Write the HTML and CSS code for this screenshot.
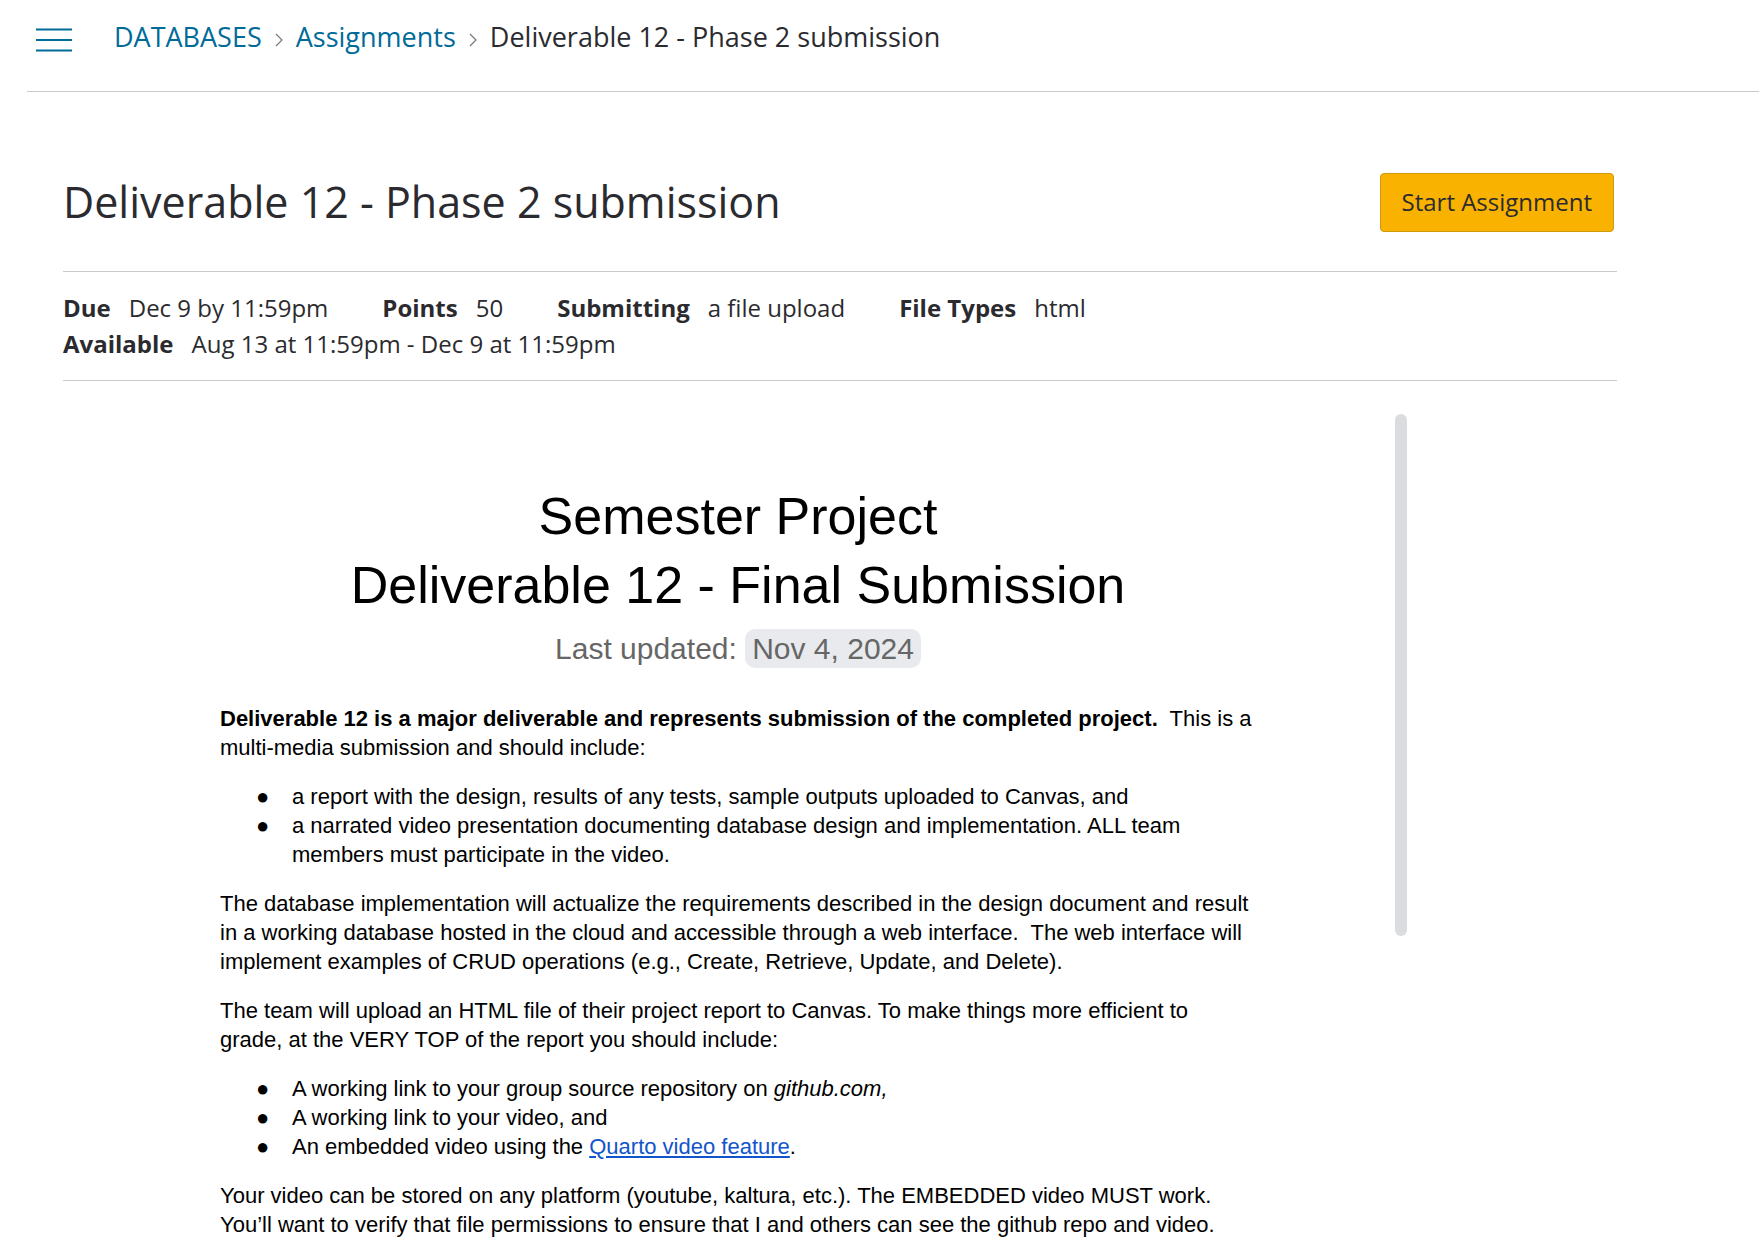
FILE: index.html
```html
<!DOCTYPE html>
<html lang="en">
<head>
<meta charset="utf-8">
<meta name="viewport" content="width=device-width, initial-scale=1">
<title>Deliverable 12 - Phase 2 submission</title>
<link rel="stylesheet" href="styles.css">
</head>
<body>
<header class="topbar">
  <button class="menu-button" type="button" aria-label="Toggle course navigation">
    <svg width="36" height="26" viewBox="0 0 36 26" aria-hidden="true"><path d="M0 2.5h36M0 13h36M0 23.5h36" fill="none" stroke="currentColor" stroke-width="2"/></svg>
  </button>
  <nav aria-label="Breadcrumb">
    <ol class="crumbs">
      <li><a href="#">DATABASES</a></li>
      <li class="crumb">
        <svg class="chevron" width="8" height="14" viewBox="0 0 8 14" aria-hidden="true"><path d="M1 1l6 6-6 6" fill="none" stroke="currentColor" stroke-width="1.2"/></svg>
        <a href="#">Assignments</a>
      </li>
      <li class="crumb">
        <svg class="chevron" width="8" height="14" viewBox="0 0 8 14" aria-hidden="true"><path d="M1 1l6 6-6 6" fill="none" stroke="currentColor" stroke-width="1.2"/></svg>
        <span aria-current="page">Deliverable 12 - Phase 2 submission</span>
      </li>
    </ol>
  </nav>
</header>
<main class="assignment">
  <div class="heading">
    <h1>Deliverable 12 - Phase 2 submission</h1>
    <button class="start-button" type="button">Start Assignment</button>
  </div>
  <dl class="details">
    <div class="detail"><dt>Due</dt><dd>Dec 9 by 11:59pm</dd></div>
    <div class="detail"><dt>Points</dt><dd>50</dd></div>
    <div class="detail"><dt>Submitting</dt><dd>a file upload</dd></div>
    <div class="detail"><dt>File Types</dt><dd>html</dd></div>
    <div class="detail detail-wide"><dt>Available</dt><dd>Aug 13 at 11:59pm - Dec 9 at 11:59pm</dd></div>
  </dl>
  <div class="viewer">
    <article class="document">
      <h2>Semester Project<br>Deliverable 12 - Final Submission</h2>
      <p class="updated">Last updated: <span class="date">Nov 4, 2024</span></p>
      <p><strong>Deliverable 12 is a major deliverable and represents submission of the completed project.</strong>&nbsp; This is a multi-media submission and should include:</p>
      <ul>
        <li>a report with the design, results of any tests, sample outputs uploaded to Canvas, and</li>
        <li>a narrated video presentation documenting database design and implementation. ALL team members must participate in the video.</li>
      </ul>
      <p>The database implementation will actualize the requirements described in the design document and result in a working database hosted in the cloud and accessible through a web interface.&nbsp; The web interface will implement examples of CRUD operations (e.g., Create, Retrieve, Update, and Delete).</p>
      <p>The team will upload an HTML file of their project report to Canvas. To make things more efficient to grade, at the VERY TOP of the report you should include:</p>
      <ul>
        <li>A working link to your group source repository on <em>github.com,</em></li>
        <li>A working link to your video, and</li>
        <li>An embedded video using the <a href="#">Quarto video feature</a>.</li>
      </ul>
      <p>Your video can be stored on any platform (youtube, kaltura, etc.). The EMBEDDED video MUST work. You’ll want to verify that file permissions to ensure that I and others can see the github repo and video.</p>
    </article>
    <div class="scroll-thumb"></div>
  </div>
</main>
</body>
</html>
```

FILE: styles.css
```css
* {
  box-sizing: border-box;
}

body {
  margin: 0;
  background: #fff;
  color: #2b2b2f;
  font-family: "Open Sans", "Noto Sans", sans-serif;
  font-size: 24px;
  line-height: 36px;
}

.topbar {
  display: flex;
  align-items: center;
  gap: 42px;
  margin-left: 27px;
  padding: 17px 9px 35px;
  border-bottom: 1px solid #c7c9cb;
}

.menu-button {
  display: flex;
  padding: 6px 0 0;
  border: 0;
  background: none;
  color: #006b99;
}

.crumbs {
  display: flex;
  flex-wrap: wrap;
  gap: 13px;
  margin: 0;
  padding: 0;
  list-style: none;
  font-size: 27px;
  line-height: 39px;
}

.crumb {
  display: flex;
  align-items: center;
  gap: 13px;
}

.crumbs a {
  color: #006b99;
  text-decoration: none;
}

.chevron {
  margin-top: 6px;
  color: #77777a;
}

.assignment {
  max-width: 1617px;
  padding: 80px 0 0 63px;
}

.heading {
  display: flex;
  align-items: center;
  justify-content: space-between;
  gap: 24px;
  padding: 0 3px 39px 0;
}

h1 {
  margin: 0;
  font-size: 43px;
  font-weight: 400;
  line-height: 60px;
}

.start-button {
  height: 59px;
  padding: 0 21px;
  border: 1px solid #cf9a0e;
  border-radius: 4px;
  background: #f9b200;
  color: #2b2b2f;
  font: inherit;
}

.details {
  display: flex;
  flex-wrap: wrap;
  column-gap: 54px;
  margin: 0;
  padding: 18px 0;
  border: solid #c7cacd;
  border-width: 1px 0;
}

.detail {
  display: flex;
  gap: 18px;
}

.detail-wide {
  flex-basis: 100%;
}

dt {
  font-weight: 700;
}

dd {
  margin: 0;
}

.viewer {
  display: flex;
  align-items: flex-start;
  max-width: 1344px;
  padding: 33px 0 0 18px;
}

.document {
  flex: 0 1 1036px;
  margin: 0 auto;
  padding-top: 68px;
  color: #000;
  font-family: "Liberation Sans", Arial, sans-serif;
  font-size: 22px;
  line-height: 29px;
}

h2 {
  margin: 0;
  font-size: 52px;
  font-weight: 400;
  line-height: 69px;
  text-align: center;
}

.document p,
.document ul {
  margin: 0 0 20px;
}

.document .updated {
  margin-bottom: 26px;
  color: #666;
  font-size: 30px;
  line-height: 58px;
  text-align: center;
}

.date {
  display: inline-block;
  padding: 0 7px;
  border-radius: 10px;
  background: #e8eaed;
  line-height: 39px;
}

.document ul {
  padding-left: 72px;
  list-style: none;
}

.document li::before {
  content: "●";
  float: left;
  width: 36px;
  margin-left: -36px;
}

.document a {
  color: #1155cc;
}

.scroll-thumb {
  flex: none;
  width: 12px;
  height: 522px;
  border-radius: 6px;
  background: #dadce0;
}
```
